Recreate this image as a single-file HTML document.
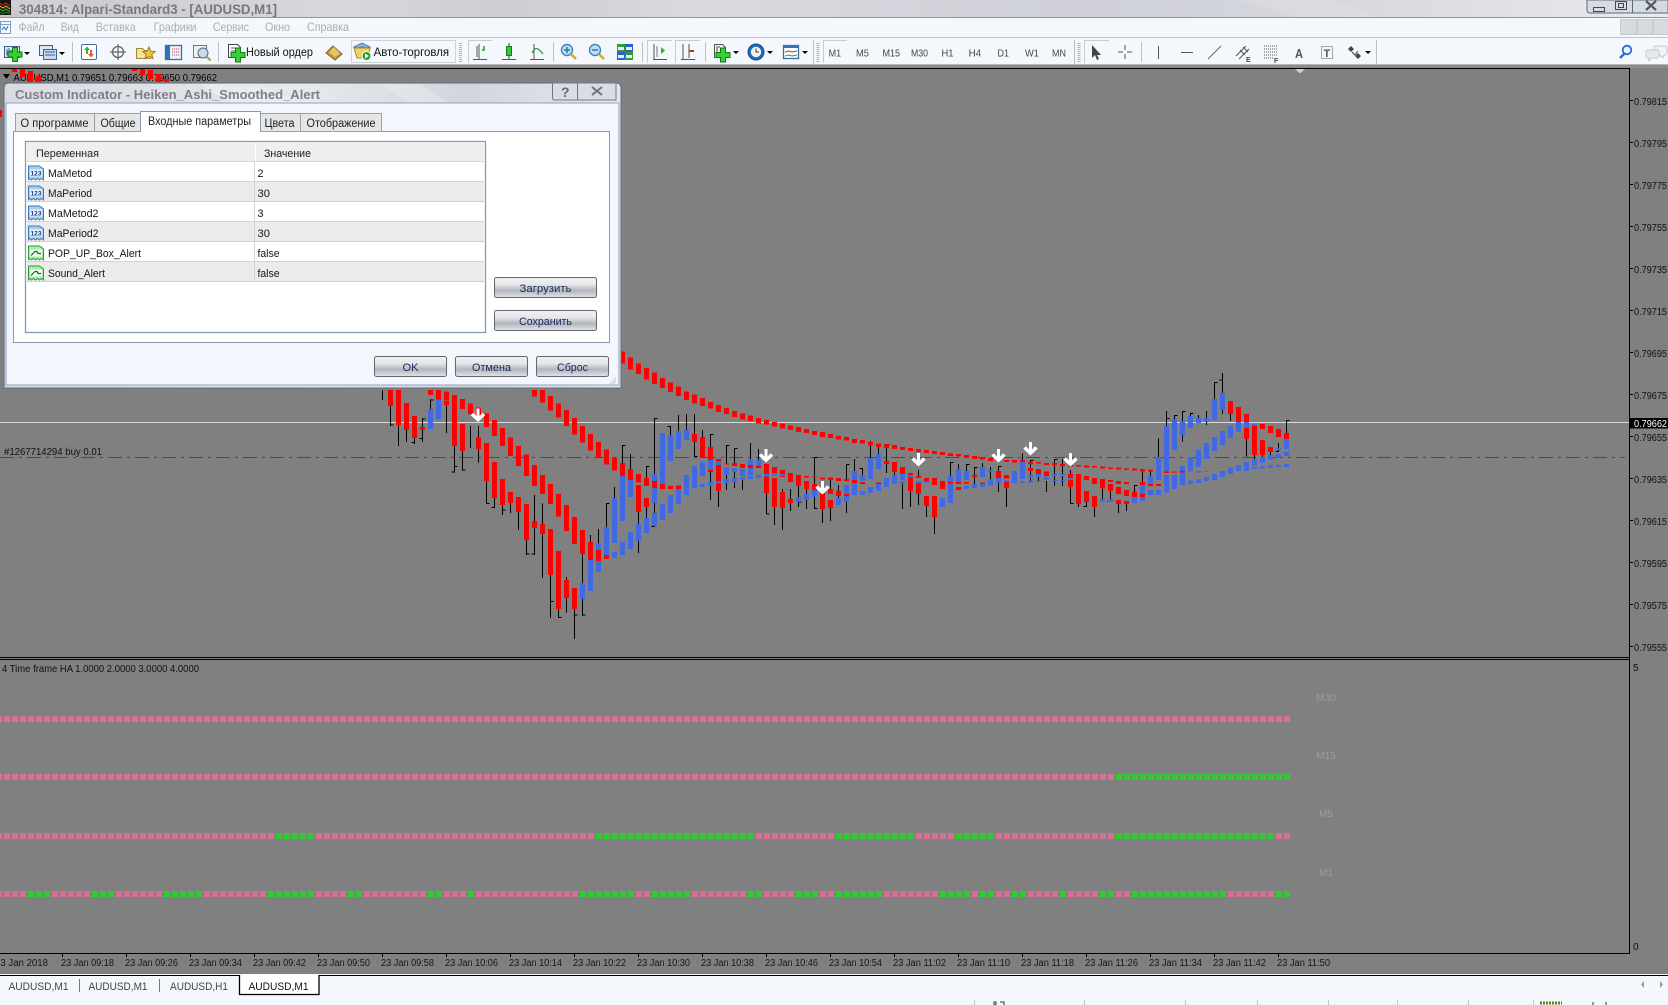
<!DOCTYPE html>
<html><head><meta charset="utf-8"><title>Alpari-Standard3</title>
<style>
html,body{margin:0;padding:0;background:#808080;width:1668px;height:1005px;overflow:hidden}
svg{display:block}
text{font-family:"Liberation Sans","Noto Sans CJK SC",sans-serif;font-size:11px;fill:#151515}
.ax text,.ax{font-size:10px;fill:#111}
.c{shape-rendering:crispEdges;fill:none}
.mn{fill:#a9adb5;font-size:12px}
.tf{fill:#444;font-size:11px}
.bt{fill:#1b2a60;font-size:11px;text-anchor:middle}
</style></head><body>
<svg xmlns="http://www.w3.org/2000/svg" width="1668" height="1005" viewBox="0 0 1668 1005">
<defs>
<linearGradient id="gt" x1="0" x2="1" y1="0" y2="0"><stop offset="0" stop-color="#c8c8cc"/><stop offset=".2" stop-color="#d8d8dc"/><stop offset=".3" stop-color="#cdced4"/><stop offset=".42" stop-color="#d9dadf"/><stop offset=".65" stop-color="#cfd0d8"/><stop offset=".8" stop-color="#d6d8de"/><stop offset="1" stop-color="#e8eaee"/></linearGradient>
<linearGradient id="gd" x1="0" x2="1" y1="0" y2="0"><stop offset="0" stop-color="#d8dbe2"/><stop offset=".5" stop-color="#e6e8ed"/><stop offset=".75" stop-color="#d2d5dc"/><stop offset="1" stop-color="#e4e7ec"/></linearGradient>
<linearGradient id="gb" x1="0" x2="0" y1="0" y2="1"><stop offset="0" stop-color="#f0f2f4"/><stop offset=".35" stop-color="#e4e6e9"/><stop offset=".65" stop-color="#b2b6bc"/><stop offset=".82" stop-color="#c9ccd1"/><stop offset="1" stop-color="#e2e4e7"/></linearGradient>
<path id="plus" d="M-2.500-7h5v4.500h4.500v5h-4.500v4.500h-5v-4.500h-4.500v-5h4.500z" fill="#35d035" stroke="#0d7d0d"/>
<path id="drop" d="M0 0h6l-3 3z" fill="#000"/>
<g id="i1"><path d="M.5 1.500h11l4 3v11l-2-1.500-2 1.500-2-1.500-2 1.500-2-1.500-2 1.500-2-1.500-1 1z" fill="#a8cff2" stroke="#3d78b8"/><rect x="2" y="5" width="12" height="7" fill="#e8f3fc"/><text x="2.500" y="11" style="font-size:6.500px;font-weight:bold;fill:#123a78" textLength="11" lengthAdjust="spacingAndGlyphs">123</text></g>
<g id="i2"><path d="M.5 1.500h11l4 3v11l-2-1.500-2 1.500-2-1.500-2 1.500-2-1.500-2 1.500-2-1.500-1 1z" fill="#a6eeaa" stroke="#2f9a3a"/><rect x="2" y="5" width="12" height="7" fill="#f2fbf2"/><path d="M3 11l4-4h2l1 2h3" stroke="#0d6a1a" fill="none" stroke-width="1.200"/></g>
<path id="arw" d="M-1.500 0h3v7.500l3.200-3.200 2.500 2.500-7.200 6.700-7.200-6.700 2.500-2.500 3.200 3.200z" fill="#fff"/>
</defs>

<!-- title bar -->
<rect width="1668" height="18" fill="url(#gt)"/>
<path d="M1240 0h90l50 18h-80zM0 0h60l40 18H30z" fill="#fff" opacity=".12"/>
<rect y="17" width="1668" height="1" fill="#8596ad"/>
<g>
<rect x="0" y="0" width="11" height="15" fill="#161616"/>
<path d="M0 3l3 2 3-2 4 3" stroke="#e02020" fill="none"/><path d="M0 6l3 2 3-2 4 3" stroke="#e8c020" fill="none"/><path d="M0 9l3 2 3-2 4 3" stroke="#40b030" fill="none"/><path d="M0 12l3 2 3-2 4 2" stroke="#208020" fill="none"/>
</g>
<text x="19" y="14" style="font-size:13.500px;fill:#77777c;font-weight:bold" textLength="258" lengthAdjust="spacingAndGlyphs">304814: Alpari-Standard3 - [AUDUSD,M1]</text>
<path d="M1587 0v10q0 3 3 3h78V0z" fill="#d6dae1" stroke="#5d6b80"/>
<path d="M1632.500 0v13" stroke="#5d6b80"/>
<rect x="1593.500" y="7.500" width="11" height="4" fill="none" stroke="#445"/>
<rect x="1615.500" y="1.500" width="11" height="8" fill="none" stroke="#445"/><rect x="1618.500" y="3.500" width="5" height="4" fill="none" stroke="#445"/>
<path d="M1646 1l10 9M1656 1l-10 9" stroke="#556" stroke-width="2.200" fill="none"/>

<!-- menu bar -->
<rect y="18" width="1668" height="19" fill="#f4f7fc"/>
<rect y="37" width="1668" height="1" fill="#c2c6ca"/>
<g fill="none" stroke="#7d9cc4"><rect x=".5" y="21.500" width="10" height="12"/><path d="M2 30l2-3 2 3 2-4" stroke="#4070b0"/><path d="M.5 24.500h10"/></g>
<text class="mn" x="18.500" y="31" textLength="26" lengthAdjust="spacingAndGlyphs">Файл</text>
<text class="mn" x="60.700" y="31" textLength="18" lengthAdjust="spacingAndGlyphs">Вид</text>
<text class="mn" x="95.700" y="31" textLength="40" lengthAdjust="spacingAndGlyphs">Вставка</text>
<text class="mn" x="153.600" y="31" textLength="43" lengthAdjust="spacingAndGlyphs">Графики</text>
<text class="mn" x="212.900" y="31" textLength="36" lengthAdjust="spacingAndGlyphs">Сервис</text>
<text class="mn" x="265" y="31" textLength="25" lengthAdjust="spacingAndGlyphs">Окно</text>
<text class="mn" x="307" y="31" textLength="42" lengthAdjust="spacingAndGlyphs">Справка</text>
<g fill="#d6d9de" stroke="#c8ccd2"><rect x="1620.500" y="19.500" width="16" height="15"/><rect x="1637.500" y="19.500" width="15" height="15"/><rect x="1653.500" y="19.500" width="15" height="15"/></g>

<!-- toolbar -->
<rect y="38" width="1668" height="26" fill="#f4f7fc"/>
<rect y="64" width="1668" height="4" fill="#8c8c8c"/>
<rect y="64" width="1668" height="1" fill="#b4b4b4"/>
<g>
<!-- new chart -->
<rect x="4.500" y="46.500" width="15" height="11" fill="#dce9f7" stroke="#3b5f90"/><path d="M7 49v6h10M9 48v3h3" stroke="#3b5f90" fill="none"/>
<use href="#plus" x="15" y="54.500"/><use href="#drop" x="24" y="52"/>
<!-- profiles -->
<rect x="39.500" y="45.500" width="13" height="10" fill="#dce9f7" stroke="#3b5f90"/><rect x="43.500" y="49.500" width="13" height="10" fill="#c7dcf2" stroke="#3b5f90"/><path d="M45 52h10M45 55h10" stroke="#3b5f90"/><use href="#drop" x="59" y="52"/>
<rect x="72" y="42" width="1" height="20" fill="#bcc0c4"/>
<!-- market watch -->
<rect x="81.500" y="44.500" width="15" height="15" rx="1.500" fill="#fff" stroke="#3a6da6"/><path d="M86 54v-4h-2l3-3.500 3 3.500h-2v4z" fill="#2eb62e"/><path d="M90 50v4h-2l3 3.500 3-3.500h-2v-4z" fill="#e45a2a"/>
<!-- navigator -->
<circle cx="118" cy="52" r="5.500" fill="#f4f7fc" stroke="#666" stroke-width="1.300"/><path d="M118 44v16M110 52h16" stroke="#666" stroke-width="1.200"/>
<!-- folder star -->
<path d="M136.500 48.500h6l2 2h6v8h-14z" fill="#f6e39a" stroke="#a08a40"/><path d="M149 47l1.800 4.200 4.400.3-3.400 2.800 1.100 4.300-3.900-2.400-3.900 2.400 1.100-4.300-3.400-2.800 4.400-.3z" fill="#f3c63c" stroke="#9c8024"/>
<!-- terminal -->
<rect x="165.500" y="45.500" width="16" height="14" fill="#e9f2fb" stroke="#2f72b8" stroke-width="1.300"/><rect x="165" y="45" width="5" height="15" fill="#2f72b8"/><path d="M172 49h8M172 52h8M172 55h8" stroke="#c04040" stroke-dasharray="1 1"/>
<!-- tester -->
<rect x="193.500" y="45.500" width="13" height="12" fill="#eef1f5" stroke="#777"/><circle cx="203" cy="53" r="5" fill="#c4dcee" stroke="#667"/><path d="M206.500 56.500l4 4" stroke="#b89838" stroke-width="2"/>
<rect x="218" y="42" width="1" height="20" fill="#bcc0c4"/>
<!-- new order -->
<path d="M228.500 44.500h9l3 3v10h-12z" fill="#fff" stroke="#444"/><path d="M231 48h5M231 51h7M231 54h5" stroke="#555"/><use href="#plus" x="238" y="55"/>
<text x="246" y="56" style="font-size:12px;fill:#111" textLength="67" lengthAdjust="spacingAndGlyphs">Новый ордер</text>
<!-- gold -->
<path d="M326 53l7-7 9 8-7 6z" fill="#c99c3a" stroke="#7c5d20"/><path d="M329 52l5-5 6 6-5 4z" fill="#e6c46a"/>
<!-- auto -->
<rect x="351.500" y="40.500" width="104" height="22" fill="#f4f7fc" stroke="#d0d4da"/>
<path d="M354 47l8-4 8 4-3 1-5-1-5 1z" fill="#8ab4d8" stroke="#507aa0"/><path d="M354 48h16l-2 10h-11z" fill="#ecd26c" stroke="#a08c3c"/><circle cx="366.500" cy="56" r="4.500" fill="#25a025" stroke="#fff"/><path d="M365 53.500l4 2.500-4 2.500z" fill="#fff"/>
<text x="373.600" y="56" style="font-size:12px;fill:#111" textLength="75.500" lengthAdjust="spacingAndGlyphs">Авто-торговля</text>
<path d="M460.500 43v19" stroke="#b0b4b8" stroke-dasharray="1 1" stroke-width="3"/>
<path d="M468.500 63V40.500H492" stroke="#c8ccd2" fill="none"/>
<path d="M479 44v15M473 59.500h14" stroke="#555" fill="none"/><path d="M477 46v11M485 58" stroke="#555"/><path d="M482 50h2v-4" stroke="#20a020" fill="none" stroke-width="1.500"/>
<path d="M509 44v15M502 59.500h14M506.500 56" stroke="#555" fill="none"/><rect x="506.500" y="46.500" width="5" height="9" fill="#35c835" stroke="#1c7c1c"/><path d="M509 43v3M509 56v3" stroke="#333"/>
<path d="M534 44v15M530 59.500h14" stroke="#555" fill="none"/><path d="M532 53q3-6 6-4t5 5" stroke="#2aa040" fill="none" stroke-width="1.300"/>
<rect x="553" y="42" width="1" height="20" fill="#bcc0c4"/>
<!-- zoom in/out -->
<circle cx="567" cy="50" r="5.500" fill="#bfe0f4" stroke="#3c88bc" stroke-width="1.400"/><path d="M564 50h6M567 47v6" stroke="#2f6f9f" stroke-width="1.400"/><path d="M571 54l5 5" stroke="#d0aa40" stroke-width="2.500"/>
<circle cx="595" cy="50" r="5.500" fill="#bfe0f4" stroke="#3c88bc" stroke-width="1.400"/><path d="M592 50h6" stroke="#2f6f9f" stroke-width="1.400"/><path d="M599 54l5 5" stroke="#d0aa40" stroke-width="2.500"/>
<!-- tile -->
<rect x="617" y="44" width="8" height="8" fill="#2e9d3a"/><rect x="625" y="44" width="8" height="8" fill="#2a62c8"/><rect x="617" y="52" width="8" height="8" fill="#2a62c8"/><rect x="625" y="52" width="8" height="8" fill="#2e9d3a"/>
<path d="M618 47h6v3h-6zM626 47h6v3h-6zM618 55h6v3h-6zM626 55h6v3h-6z" fill="#e8eef6"/>
<rect x="642" y="42" width="1" height="20" fill="#bcc0c4"/>
<path d="M647.500 63V40.500H672" stroke="#c8ccd2" fill="none"/>
<path d="M654 44v15M653 59.500h14" stroke="#555" fill="none"/><path d="M661 47v7l4-3.500z" fill="#2fb02f"/><path d="M657 46v11" stroke="#777"/>
<path d="M675.500 63V40.500H700" stroke="#c8ccd2" fill="none"/>
<path d="M683 44v15M681 59.500h14M689 44v14" stroke="#555" fill="none"/><path d="M691 51h3M689 51h2" stroke="#d03020" stroke-width="2"/>
<rect x="705" y="42" width="1" height="20" fill="#bcc0c4"/>
<!-- indicators -->
<path d="M714.500 44.500h8l3 3v10h-11z" fill="#eef1f4" stroke="#555"/><path d="M717 48v6M716 47h4" stroke="#555"/><use href="#plus" x="723" y="55"/><use href="#drop" x="733" y="51"/>
<!-- clock -->
<circle cx="756" cy="52" r="8" fill="#1f69b8" stroke="#184f8e"/><circle cx="756" cy="52" r="5.200" fill="#eef2f6"/><path d="M756 48.500v3.500h3" stroke="#333" fill="none"/><use href="#drop" x="767" y="51"/>
<!-- templates -->
<rect x="783.500" y="45.500" width="15" height="13" fill="#fff" stroke="#3a6da6" stroke-width="1.300"/><rect x="783" y="45" width="16" height="3" fill="#3a72b6"/><path d="M785 52l4-1 3 1 5-1" stroke="#d03030" fill="none"/><path d="M785 56l4-1 3 1 5-1" stroke="#30a030" fill="none"/><use href="#drop" x="802" y="51"/>
<rect x="813" y="40" width="1" height="24" fill="#bcc0c4"/>
<path d="M818 43v19" stroke="#b0b4b8" stroke-dasharray="1 1" stroke-width="3"/>
<path d="M823.500 63V40.500H847" stroke="#c8ccd2" fill="none"/>
</g>
<g style="font-size:10.500px">
<text x="828.600" y="56.500" style="font-size:10.500px;fill:#444" textLength="12.500" lengthAdjust="spacingAndGlyphs">M1</text>
<text x="856" y="56.500" style="font-size:10.500px;fill:#444" textLength="13" lengthAdjust="spacingAndGlyphs">M5</text>
<text x="882.500" y="56.500" style="font-size:10.500px;fill:#444" textLength="17.500" lengthAdjust="spacingAndGlyphs">M15</text>
<text x="911" y="56.500" style="font-size:10.500px;fill:#444" textLength="17" lengthAdjust="spacingAndGlyphs">M30</text>
<text x="941.500" y="56.500" style="font-size:10.500px;fill:#444" textLength="12" lengthAdjust="spacingAndGlyphs">H1</text>
<text x="968.600" y="56.500" style="font-size:10.500px;fill:#444" textLength="12.500" lengthAdjust="spacingAndGlyphs">H4</text>
<text x="997.500" y="56.500" style="font-size:10.500px;fill:#444" textLength="11.500" lengthAdjust="spacingAndGlyphs">D1</text>
<text x="1025" y="56.500" style="font-size:10.500px;fill:#444" textLength="14" lengthAdjust="spacingAndGlyphs">W1</text>
<text x="1052" y="56.500" style="font-size:10.500px;fill:#444" textLength="14" lengthAdjust="spacingAndGlyphs">MN</text>
</g>
<rect x="1074" y="40" width="1" height="24" fill="#bcc0c4"/>
<path d="M1079 43v19" stroke="#b0b4b8" stroke-dasharray="1 1" stroke-width="3"/>
<path d="M1084.500 63V40.500H1109" stroke="#c8ccd2" fill="none"/>
<path d="M1092 45v13l3-3 2 5 2-1-2-4h4z" fill="#444"/>
<path d="M1125 45v5M1125 54v5M1118 52h5M1127 52h5" stroke="#555" fill="none"/>
<rect x="1141" y="42" width="1" height="20" fill="#bcc0c4"/>
<path d="M1158.500 46v13" stroke="#555"/><path d="M1181 52.500h12" stroke="#555"/><path d="M1208 59l13-13" stroke="#666"/>
<path d="M1236 56l10-10M1239 59l10-10M1240 50l5 5M1243 47l5 5" stroke="#555" fill="none"/><text x="1246" y="62" style="font-size:7px;font-weight:bold;fill:#444">E</text>
<path d="M1264 46h14M1264 49h14M1264 52h14M1264 55h14M1264 58h9" stroke="#555" stroke-dasharray="1 1" fill="none"/><text x="1274" y="63" style="font-size:7px;font-weight:bold;fill:#444">F</text>
<text x="1295" y="58" style="font-size:13px;fill:#555;font-weight:bold" textLength="8" lengthAdjust="spacingAndGlyphs">A</text>
<rect x="1321.500" y="46.500" width="11" height="12" fill="none" stroke="#555" stroke-dasharray="1 1"/><text x="1323.500" y="57" style="font-size:11px;fill:#555;font-weight:bold">T</text>
<path d="M1348 49l3-3 3 3-3 3zM1355 56l3-3 3 3-3 3z" fill="#444"/><path d="M1352 52l3 3 3-4" stroke="#444" fill="none"/><use href="#drop" x="1365" y="51"/>
<rect x="1376" y="40" width="1" height="24" fill="#bcc0c4"/>
<circle cx="1627" cy="50" r="4.300" fill="#eaf2fb" stroke="#2a6fcf" stroke-width="1.800"/><path d="M1624 54l-4 4" stroke="#2a6fcf" stroke-width="2.500"/>
<path d="M1654 46h11a2 2 0 0 1 2 2v5a2 2 0 0 1-2 2h-1l-1 3-3-3h-6z" fill="#f0f2f4" stroke="#c4c8cc"/><path d="M1648 50h9a2 2 0 0 1 2 2v4a2 2 0 0 1-2 2h-6l-2 3-1-3a2 2 0 0 1-2-2v-4a2 2 0 0 1 2-2z" fill="#e6e9ec" stroke="#c4c8cc"/>

<!-- chart -->
<rect y="68" width="1668" height="906" fill="#808080"/>
<rect y="68" width="1629" height="1" fill="#000"/>
<rect x="1629" y="68" width="1" height="885" fill="#000"/>
<path d="M1295 69h10l-5 4.500z" fill="#cfcfcf"/>
<rect y="657" width="1629" height="1" fill="#000"/><rect y="659" width="1629" height="1" fill="#000"/><rect y="953" width="1630" height="1" fill="#000"/>
<rect y="422" width="1629" height="1" fill="#d9d9d9"/>
<path class="c" d="M0 457.500H1625" stroke="#0b7a0b" stroke-dasharray="14 5 3 5"/>
<text x="4" y="455" class="ax" style="font-size:10px" textLength="98" lengthAdjust="spacingAndGlyphs">#1267714294 buy 0.01</text>

<path d="M3 74h7l-3.500 5z" fill="#000"/>
<text x="13.500" y="81" style="font-size:10px;fill:#000" textLength="203.500" lengthAdjust="spacingAndGlyphs">AUDUSD,M1  0.79651 0.79663 0.79650 0.79662</text>
<path class="c" fill="#f00" style="fill:#f00" d="M12 69h5v3h-5zM20 69h5v8h-5zM28 71h5v11h-5zM36 76h5v6h-5zM132 69h5v2h-5zM140 69h5v6h-5zM148 70h5v9h-5zM156 74h5v8h-5zM164 79h5v3h-5zM0 110h2v7H0z"/>

<!-- candles zoom5 coordinates -->
<g transform="translate(0,350) scale(1,.33333)">
<path class="c" stroke="#000" stroke-width="1" d="M382.500 120V150M390.500 168V228M398.500 225V288M406.500 240V276M414.500 264V282M422.500 204V276M430.500 148V177M446.500 165V249M454.500 288V368M462.500 303V362M470.500 228V294M478.500 228V338M486.500 393V462M494.500 444V474M502.500 465V495M510.500 459V489M518.500 486V540M526.500 570V615M534.500 435V615M542.500 460V684M550.500 675V804M558.500 777V804M566.500 681V690M566.500 744V788M574.500 777V867M582.500 612V798M590.500 555V576M598.500 537V580M606.500 459V531M614.500 411V444M622.500 285V339M630.500 312V357M638.500 486V609M646.500 348V384M646.500 471V513M654.500 204V372M654.500 459V530M670.500 228V255M678.500 195V243M686.500 192V240M694.500 192V252M694.500 276V321M702.500 240V261M710.500 252V291M710.500 366V450M718.500 423V471M726.500 285V340M726.500 375V420M734.500 294V345M734.500 366V414M742.500 390V420M750.500 279V330M758.500 297V330"/>
<path class="c" stroke="#000" stroke-width="3" d="M390.500 225h3M414.500 278h-3M422.500 266h-3M422.500 207h3M430.500 150h3M454.500 350h3M454.500 366h-3M462.500 360h3M486.500 460h3M494.500 472h-3M502.500 480h3M526.500 612h3M534.500 612h-3M550.500 755h3M558.500 802h3M574.500 795h3M582.500 795h3M606.500 460h3M622.500 287h3M646.500 350h3M654.500 205h3M654.500 530h-3M670.500 230h-3M694.500 320h3M710.500 253h3M726.500 287h3M734.500 296h3"/>
<path class="c" stroke="#f00" stroke-width="5" d="M390.500 120V168M398.500 120V225M406.500 159V240M414.500 198V264M422.500 231V240M430.500 120V135M438.500 120V148M446.500 125V150M446.500 152V165M454.500 135V288M462.500 147V177M462.500 222V303M470.500 160V192M478.500 172V200M478.500 262V297M486.500 190V231M486.500 279V393M494.500 210V258M494.500 336V444M502.500 234V288M502.500 387V465M510.500 262V318M510.500 426V459M518.500 288V348M518.500 441V486M526.500 314V378M526.500 462V570M534.500 120V140M534.500 345V408M534.500 513V534M542.500 120V158M542.500 375V432M542.500 522V552M550.500 138V182M550.500 402V462M550.500 537V675M558.500 160V202M558.500 432V500M558.500 603V777M566.500 180V228M566.500 465V543M566.500 690V744M574.500 204V254M574.500 501V582M574.500 714V777M582.500 228V278M582.500 540V612M590.500 252V302M590.500 576V630M598.500 276V324M598.500 600V633M606.500 298V344M606.500 615V627M614.500 322V362M622.500 5V40M622.500 339V378M630.500 22V58M630.500 357V390M638.500 40V72M638.500 372V398M638.500 405V486M646.500 54V88M646.500 384V408M646.500 444V471M654.500 68V102M654.500 393V414M662.500 84V114M662.500 402V417M670.500 98V126M670.500 408V417M678.500 110V138M678.500 408V417M686.500 124V150M694.500 134V160M694.500 252V276M702.500 144V168M702.500 261V324M710.500 156V176M710.500 291V330M710.500 360V366M718.500 165V186M718.500 327V333M718.500 345V393M718.500 400V423M726.500 174V192M726.500 340V343M734.500 183V201M734.500 339V348M742.500 190V208M742.500 342V354M750.500 197V213M750.500 345V354M758.500 204V220M758.500 348V354"/>
<path class="c" stroke="#4169e1" stroke-width="5" d="M430.500 177V237M438.500 148V207M470.500 262V264M582.500 699V747M590.500 630V723M598.500 580V600M598.500 633V666M606.500 531V615M614.500 444V579M614.500 606V624M622.500 378V513M622.500 576V615M630.500 390V441M630.500 546V597M638.500 522V573M646.500 504V549M654.500 372V393M654.500 414V459M654.500 489V528M662.500 249V402M662.500 462V510M670.500 255V333M670.500 435V489M678.500 243V297M678.500 405V408M678.500 417V462M686.500 240V270M686.500 375V435M694.500 348V414M702.500 336V378M702.500 402V411M710.500 330V360M710.500 396V408M718.500 333V345M718.500 393V400M726.500 351V375M726.500 387V399M734.500 354V366M734.500 384V396M742.500 357V378M742.500 381V390M750.500 327V345M750.500 354V375M750.500 378V387M758.500 330V348M758.500 375V384"/>
</g>

<!-- candles zoom6 coordinates -->
<g transform="translate(0,370) scale(1,.33333)">
<path class="c" stroke="#000" stroke-width="1" d="M766.500 369V432M774.500 411V465M782.500 357V366M782.500 414V480M790.500 357V387M790.500 399V423M798.500 348V381M798.500 396V411M806.500 357V372M806.500 390V417M814.500 262V342M814.500 381V417M822.500 417V459M830.500 330V357M830.500 414V453M838.500 345V363M838.500 378V384M846.500 282V327M846.500 396V429M854.500 267V303M862.500 294V315M870.500 213V264M878.500 231V252M886.500 222V273M886.500 282V309M894.500 306V315M902.500 342V417M910.500 363V411M918.500 300V318M918.500 372V405M926.500 408V441M934.500 441V492M950.500 276V318M958.500 282V297M966.500 282V303M974.500 291V315M974.500 321V342M982.500 279V291M990.500 291V300M990.500 305V327M998.500 288V303M998.500 339V366M1006.500 354V411M1022.500 250V270M1030.500 270V294M1030.500 303V315M1030.500 324V333M1038.500 321V333M1046.500 333V366M1054.500 267V312M1054.500 318V348M1062.500 267V312M1062.500 318V348M1070.500 300V312M1070.500 351V402M1078.500 402V411M1086.500 396V411M1094.500 411V441M1102.500 356V387M1110.500 363V396M1118.500 402V429M1126.500 402V423M1134.500 345V366M1142.500 303V336M1150.500 300V318M1158.500 205V261"/>
<path class="c" stroke="#000" stroke-width="3" d="M766.500 432h3M798.500 396h3M814.500 262h3M814.500 416h3M846.500 283h3M862.500 296h-3M886.500 224h3M950.500 277h3M966.500 283h3M974.500 292h3M998.500 290h3M1030.500 271h3M1054.500 268h3M1070.500 400h3M1086.500 410h-3M1110.500 395h-3M1134.500 346h3"/>
<path class="c" stroke="#f00" stroke-width="5" d="M766.500 150V163M766.500 282V312M766.500 320V369M774.500 156V170M774.500 291V309M774.500 324V411M782.500 161V175M782.500 300V312M782.500 318V321M782.500 366V414M790.500 167V180M790.500 309V336M790.500 387V399M798.500 171V186M798.500 315V348M806.500 177V189M806.500 318V322M806.500 333V357M814.500 183V195M814.500 319V323M814.500 342V360M822.500 186V201M822.500 322V328M822.500 369V417M830.500 192V204M830.500 322V330M830.500 357V372M830.500 390V414M838.500 198V209M838.500 324V333M838.500 363V378M846.500 201V212M846.500 327V333M846.500 372V378M854.500 207V219M854.500 330V339M862.500 210V220M862.500 336V342M870.500 216V226M878.500 221V231M878.500 337V342M886.500 222V234M886.500 273V282M894.500 225V237M894.500 276V306M902.500 231V240M902.500 291V312M910.500 234V243M910.500 309V315M910.500 322V363M918.500 237V246M918.500 318V324M918.500 339V372M926.500 240V249M926.500 324V333M926.500 378V408M934.500 243V252M934.500 324V345M934.500 378V441M942.500 246V255M942.500 333V357M950.500 250V258M950.500 336V340M958.500 252V260M958.500 336V342M958.500 351V360M966.500 255V264M966.500 336V340M974.500 258V267M974.500 315V321M982.500 261V269M982.500 337V340M990.500 264V273M998.500 266V272M998.500 303V324M1006.500 270V276M1006.500 315V326M1006.500 336V354M1014.500 270V278M1022.500 270V276M1030.500 276V282M1030.500 294V303M1038.500 276V281M1038.500 297V312M1046.500 279V285M1046.500 304V318M1054.500 279V285M1062.500 282V288M1070.500 285V290M1070.500 312V324M1070.500 330V351M1078.500 285V290M1078.500 312V402M1086.500 287V292M1086.500 318V330M1086.500 363V396M1094.500 288V293M1094.500 324V342M1094.500 378V411M1102.500 289V295M1102.500 327V356M1110.500 292V297M1110.500 330V336M1110.500 342V363M1118.500 293V299M1118.500 333V342M1118.500 351V372M1118.500 390V402M1126.500 295V300M1126.500 336V342M1126.500 360V378M1126.500 393V402M1134.500 295V302M1134.500 366V381M1142.500 297V304M1142.500 336V345M1142.500 372V381M1150.500 299V305M1150.500 342V348M1158.500 300V303M1158.500 342V348"/>
<path class="c" stroke="#4169e1" stroke-width="5" d="M766.500 312V320M774.500 311V318M782.500 312V318M798.500 381V396M806.500 372V390M814.500 360V381M838.500 384V405M846.500 345V372M846.500 378V396M854.500 303V330M854.500 339V375M862.500 315V333M862.500 363V375M870.500 264V327M870.500 351V369M878.500 252V297M878.500 342V363M886.500 324V351M894.500 315V342M902.500 312V330M902.500 333V342M910.500 315V322M918.500 333V339M926.500 333V339M942.500 384V411M950.500 318V336M950.500 340V399M958.500 297V336M966.500 303V330M966.500 348V357M974.500 342V354M982.500 291V321M982.500 340V351M990.500 300V305M990.500 327V345M998.500 324V339M1006.500 330V336M1014.500 303V339M1022.500 276V327M1022.500 333V339M1030.500 315V324M1030.500 333V339M1038.500 312V321M1038.500 333V336M1046.500 320V330M1054.500 312V318M1054.500 330V333M1062.500 312V315M1062.500 330V333M1070.500 325V330M1102.500 387V396M1110.500 387V396M1134.500 381V399M1142.500 345V372M1142.500 381V393M1150.500 318V342M1150.500 360V375M1158.500 261V330M1158.500 360V375"/>
</g>

<!-- candles zoom7 coordinates -->
<g transform="translate(0,360) scale(1,.33333)">
<path class="c" stroke="#000" stroke-width="1" d="M1166.500 153V198M1174.500 165V178M1182.500 153V183M1182.500 225V245M1190.500 158V168M1198.500 165V174M1206.500 153V174M1206.500 184V195M1214.500 66V117M1222.500 39V99M1222.500 150V162M1230.500 162V183M1246.500 237V290M1254.500 285V297M1262.500 285V291M1270.500 276V285M1278.500 249V264M1278.500 270V276M1286.500 180V219"/>
<path class="c" stroke="#000" stroke-width="3" d="M1166.500 176h3M1174.500 166h3M1182.500 155h3M1190.500 160h3M1214.500 67h3M1222.500 60h-3M1278.500 274h-3M1286.500 182h3"/>
<path class="c" stroke="#f00" stroke-width="5" d="M1166.500 335V339M1174.500 335V338M1182.500 333V338M1230.500 123V162M1238.500 141V186M1246.500 162V186M1246.500 204V237M1254.500 198V285M1262.500 192V207M1262.500 240V285M1270.500 198V219M1270.500 261V276M1278.500 207V231M1286.500 219V237"/>
<path class="c" stroke="#4169e1" stroke-width="5" d="M1166.500 198V335M1166.500 345V397M1174.500 178V270M1174.500 345V387M1182.500 183V225M1182.500 318V333M1182.500 338V375M1190.500 168V204M1190.500 291V335M1190.500 362V372M1198.500 174V189M1198.500 270V321M1198.500 333V338M1198.500 357V369M1206.500 174V184M1206.500 249V297M1206.500 333V336M1206.500 351V363M1214.500 117V180M1214.500 231V273M1214.500 342V360M1222.500 99V150M1222.500 213V255M1222.500 333V351M1230.500 198V234M1230.500 323V342M1238.500 186V216M1238.500 315V333M1246.500 186V204M1246.500 306V333M1254.500 192V198M1254.500 297V318M1254.500 321V327M1262.500 291V309M1262.500 318V325M1270.500 285V300M1270.500 315V324M1278.500 264V270M1278.500 282V294M1278.500 315V321M1286.500 237V267M1286.500 276V288M1286.500 312V321"/>
</g>

<!-- arrows -->
<use href="#arw" x="478" y="408.500"/><use href="#arw" x="766" y="449"/><use href="#arw" x="822.500" y="481"/><use href="#arw" x="918.500" y="453"/><use href="#arw" x="998.500" y="449"/><use href="#arw" x="1030.500" y="442"/><use href="#arw" x="1070.500" y="453"/>

<!-- price axis -->
<g class="ax">
<path class="c" stroke="#000" d="M1630 100.500h3M1630 142.500h3M1630 184.500h3M1630 226.500h3M1630 268.500h3M1630 310.500h3M1630 352.500h3M1630 394.500h3M1630 436.500h3M1630 478.500h3M1630 520.500h3M1630 562.500h3M1630 604.500h3M1630 646.500h3"/>
<g style="font-size:10px">
<text x="1634" y="105" textLength="33" lengthAdjust="spacingAndGlyphs">0.79815</text>
<text x="1634" y="147" textLength="33" lengthAdjust="spacingAndGlyphs">0.79795</text>
<text x="1634" y="189" textLength="33" lengthAdjust="spacingAndGlyphs">0.79775</text>
<text x="1634" y="231" textLength="33" lengthAdjust="spacingAndGlyphs">0.79755</text>
<text x="1634" y="273" textLength="33" lengthAdjust="spacingAndGlyphs">0.79735</text>
<text x="1634" y="315" textLength="33" lengthAdjust="spacingAndGlyphs">0.79715</text>
<text x="1634" y="357" textLength="33" lengthAdjust="spacingAndGlyphs">0.79695</text>
<text x="1634" y="399" textLength="33" lengthAdjust="spacingAndGlyphs">0.79675</text>
<text x="1634" y="441" textLength="33" lengthAdjust="spacingAndGlyphs">0.79655</text>
<text x="1634" y="483" textLength="33" lengthAdjust="spacingAndGlyphs">0.79635</text>
<text x="1634" y="525" textLength="33" lengthAdjust="spacingAndGlyphs">0.79615</text>
<text x="1634" y="567" textLength="33" lengthAdjust="spacingAndGlyphs">0.79595</text>
<text x="1634" y="609" textLength="33" lengthAdjust="spacingAndGlyphs">0.79575</text>
<text x="1634" y="651" textLength="33" lengthAdjust="spacingAndGlyphs">0.79555</text>
</g>
<rect x="1630" y="418" width="38" height="10.500" fill="#000"/>
<text x="1634" y="427" style="font-size:10px;fill:#fff" textLength="33" lengthAdjust="spacingAndGlyphs">0.79662</text>
<text x="1633" y="671" style="font-size:10px">5</text>
<text x="1633" y="950" style="font-size:10px">0</text>
</g>

<!-- subwindow -->
<text x="2" y="672" style="font-size:10px;fill:#111" textLength="197" lengthAdjust="spacingAndGlyphs">4 Time frame HA 1.0000 2.0000 3.0000 4.0000</text>
<path class="c" stroke="#dd6e93" stroke-width="6" stroke-dasharray="6 2" d="M-4 719H1290M-4 777H1290M-4 836H1290M-4 894H1290"/>
<path class="c" stroke="#2bcf2b" stroke-width="6" stroke-dasharray="6 2" d="M1116 777H1290M276 836H314M596 836H754M836 836H914M956 836H994M1116 836H1274M28 894H50M92 894H114M164 894H202M268 894H314M348 894H362M428 894H442M468 894H474M580 894H634M652 894H690M748 894H762M796 894H818M836 894H882M940 894H970M980 894H994M1012 894H1026M1060 894H1066M1100 894H1114M1132 894H1226M1276 894H1290"/>
<g style="font-size:10px">
<text x="1316" y="701" style="font-size:10px;fill:#9c9c9c" textLength="20" lengthAdjust="spacingAndGlyphs">M30</text>
<text x="1316" y="759" style="font-size:10px;fill:#9c9c9c" textLength="20" lengthAdjust="spacingAndGlyphs">M15</text>
<text x="1319" y="817" style="font-size:10px;fill:#9c9c9c" textLength="14" lengthAdjust="spacingAndGlyphs">M5</text>
<text x="1319" y="876" style="font-size:10px;fill:#9c9c9c" textLength="14" lengthAdjust="spacingAndGlyphs">M1</text>
</g>

<!-- time axis -->
<path class="c" stroke="#000" d="M62.500 954v3M126.500 954v3M190.500 954v3M254.500 954v3M318.500 954v3M382.500 954v3M446.500 954v3M510.500 954v3M574.500 954v3M638.500 954v3M702.500 954v3M766.500 954v3M830.500 954v3M894.500 954v3M958.500 954v3M1022.500 954v3M1086.500 954v3M1150.500 954v3M1214.500 954v3M1278.500 954v3"/>
<g style="font-size:10px">
<text x="-5" y="966" style="font-size:10px" textLength="53" lengthAdjust="spacingAndGlyphs">23 Jan 2018</text>
<text x="61" y="966" style="font-size:10px" textLength="53" lengthAdjust="spacingAndGlyphs">23 Jan 09:18</text>
<text x="125" y="966" style="font-size:10px" textLength="53" lengthAdjust="spacingAndGlyphs">23 Jan 09:26</text>
<text x="189" y="966" style="font-size:10px" textLength="53" lengthAdjust="spacingAndGlyphs">23 Jan 09:34</text>
<text x="253" y="966" style="font-size:10px" textLength="53" lengthAdjust="spacingAndGlyphs">23 Jan 09:42</text>
<text x="317" y="966" style="font-size:10px" textLength="53" lengthAdjust="spacingAndGlyphs">23 Jan 09:50</text>
<text x="381" y="966" style="font-size:10px" textLength="53" lengthAdjust="spacingAndGlyphs">23 Jan 09:58</text>
<text x="445" y="966" style="font-size:10px" textLength="53" lengthAdjust="spacingAndGlyphs">23 Jan 10:06</text>
<text x="509" y="966" style="font-size:10px" textLength="53" lengthAdjust="spacingAndGlyphs">23 Jan 10:14</text>
<text x="573" y="966" style="font-size:10px" textLength="53" lengthAdjust="spacingAndGlyphs">23 Jan 10:22</text>
<text x="637" y="966" style="font-size:10px" textLength="53" lengthAdjust="spacingAndGlyphs">23 Jan 10:30</text>
<text x="701" y="966" style="font-size:10px" textLength="53" lengthAdjust="spacingAndGlyphs">23 Jan 10:38</text>
<text x="765" y="966" style="font-size:10px" textLength="53" lengthAdjust="spacingAndGlyphs">23 Jan 10:46</text>
<text x="829" y="966" style="font-size:10px" textLength="53" lengthAdjust="spacingAndGlyphs">23 Jan 10:54</text>
<text x="893" y="966" style="font-size:10px" textLength="53" lengthAdjust="spacingAndGlyphs">23 Jan 11:02</text>
<text x="957" y="966" style="font-size:10px" textLength="53" lengthAdjust="spacingAndGlyphs">23 Jan 11:10</text>
<text x="1021" y="966" style="font-size:10px" textLength="53" lengthAdjust="spacingAndGlyphs">23 Jan 11:18</text>
<text x="1085" y="966" style="font-size:10px" textLength="53" lengthAdjust="spacingAndGlyphs">23 Jan 11:26</text>
<text x="1149" y="966" style="font-size:10px" textLength="53" lengthAdjust="spacingAndGlyphs">23 Jan 11:34</text>
<text x="1213" y="966" style="font-size:10px" textLength="53" lengthAdjust="spacingAndGlyphs">23 Jan 11:42</text>
<text x="1277" y="966" style="font-size:10px" textLength="53" lengthAdjust="spacingAndGlyphs">23 Jan 11:50</text>
</g>

<!-- tab bar -->
<rect y="974" width="1668" height="1" fill="#f4f7fc"/>
<rect y="975" width="1668" height="1" fill="#000"/>
<rect y="976" width="1668" height="29" fill="#f4f7fc"/>
<path d="M79.500 979v13M159.500 979v13" stroke="#777"/>
<text class="tf" x="8.500" y="990" textLength="60" lengthAdjust="spacingAndGlyphs">AUDUSD,M1</text>
<text class="tf" x="88.500" y="990" textLength="59" lengthAdjust="spacingAndGlyphs">AUDUSD,M1</text>
<text class="tf" x="170" y="990" textLength="58" lengthAdjust="spacingAndGlyphs">AUDUSD,H1</text>
<path d="M239.500 975v19.500H319V975" fill="#fff" stroke="#000" stroke-width="1.300"/>
<text x="248.500" y="990" style="font-size:11px;fill:#111" textLength="60" lengthAdjust="spacingAndGlyphs">AUDUSD,M1</text>
<path d="M1644 981v7l-3-3.500zM1660 981v7l3-3.500z" fill="#999"/>
<!-- status -->
<rect y="1000" width="1668" height="5" fill="#f4f7fc"/>
<path d="M974.500 1000v5M1084.500 1000v5M1185.500 1000v5M1257.500 1000v5M1328.500 1000v5M1397.500 1000v5M1468.500 1000v5M1533.500 1000v5" stroke="#c4c8cc"/>
<path class="c" stroke="#6a7f10" stroke-width="3" stroke-dasharray="2 1" d="M1540 1003H1562"/>
<path d="M994 1005v-3h2v3zM1000 1002h4v3M1593 1005v-3M1606 1002v3" stroke="#333" fill="none"/>

<!-- dialog -->
<path d="M4 388V88q0-5 5-5h607q5 0 5 5v300z" fill="url(#gd)" stroke="#5f6b7d"/>
<path d="M200 84h60l40 19h-70zM380 84h40l30 19h-40z" fill="#fff" opacity=".22"/>
<rect x="6" y="103" width="613" height="282" fill="#f3f7fd" stroke="#8fa2bb"/>
<text x="15" y="99" style="font-size:13px;fill:#7d8087;font-weight:bold" textLength="305" lengthAdjust="spacingAndGlyphs">Custom Indicator - Heiken_Ashi_Smoothed_Alert</text>
<path d="M552.500 83v15q0 2 2 2H616V83z" fill="#d9dde3" stroke="#6e7a8c"/>
<path d="M577.500 83v17" stroke="#6e7a8c"/>
<text x="561" y="97" style="font-size:14px;fill:#667;font-weight:bold">?</text>
<path d="M592 87l10 8M602 87l-10 8" stroke="#6a7280" stroke-width="2" fill="none"/>

<!-- tabs -->
<rect x="13.500" y="131.500" width="596" height="211" fill="#fff" stroke="#8c9aae"/>
<g fill="#e6e6e6" stroke="#9aa0aa">
<rect x="15.500" y="113.500" width="79" height="18"/>
<rect x="94.500" y="113.500" width="46" height="18"/>
<rect x="260.500" y="113.500" width="40" height="18"/>
<rect x="300.500" y="113.500" width="81" height="18"/>
</g>
<path d="M140.500 132V111.500H260.500V132" fill="#fff" stroke="#8c9aae"/>
<rect x="141" y="130" width="119" height="3" fill="#fff"/>
<g>
<text x="20.500" y="127" style="font-size:11.500px;fill:#222" textLength="68" lengthAdjust="spacingAndGlyphs">О программе</text>
<text x="100.500" y="127" style="font-size:11.500px;fill:#222" textLength="35" lengthAdjust="spacingAndGlyphs">Общие</text>
<text x="148" y="125" style="font-size:11.500px;fill:#222" textLength="103" lengthAdjust="spacingAndGlyphs">Входные параметры</text>
<text x="264.500" y="127" style="font-size:11.500px;fill:#222" textLength="30" lengthAdjust="spacingAndGlyphs">Цвета</text>
<text x="306.500" y="127" style="font-size:11.500px;fill:#222" textLength="69" lengthAdjust="spacingAndGlyphs">Отображение</text>
</g>

<!-- table -->
<rect x="25.500" y="141.500" width="460" height="191" fill="#fff" stroke="#7f9db9" stroke-width="1.300"/>
<rect x="27" y="143" width="457" height="18" fill="#efefef"/><rect x="27" y="161" width="457" height="1" fill="#d8d8d8"/><rect x="255" y="143" width="1" height="18" fill="#fff"/>
<rect x="27" y="182" width="457" height="20" fill="#ebebeb"/><rect x="27" y="222" width="457" height="20" fill="#ebebeb"/><rect x="27" y="262" width="457" height="20" fill="#ebebeb"/>
<path class="c" stroke="#d2d2d2" d="M27 181.500H484M27 201.500H484M27 221.500H484M27 241.500H484M27 261.500H484M27 281.500H484M254.500 162V282"/>
<g style="font-size:11px">
<text x="36" y="157" style="fill:#222" textLength="63" lengthAdjust="spacingAndGlyphs">Переменная</text>
<text x="264" y="157" style="fill:#222" textLength="47" lengthAdjust="spacingAndGlyphs">Значение</text>
<text x="48" y="177" textLength="44" lengthAdjust="spacingAndGlyphs">MaMetod</text>
<text x="48" y="197" textLength="44" lengthAdjust="spacingAndGlyphs">MaPeriod</text>
<text x="48" y="217" textLength="50.500" lengthAdjust="spacingAndGlyphs">MaMetod2</text>
<text x="48" y="237" textLength="50.500" lengthAdjust="spacingAndGlyphs">MaPeriod2</text>
<text x="48" y="257" textLength="93" lengthAdjust="spacingAndGlyphs">POP_UP_Box_Alert</text>
<text x="48" y="277" textLength="57" lengthAdjust="spacingAndGlyphs">Sound_Alert</text>
<text x="257.500" y="177" textLength="6" lengthAdjust="spacingAndGlyphs">2</text>
<text x="257.500" y="197" textLength="12.500" lengthAdjust="spacingAndGlyphs">30</text>
<text x="257.500" y="217" textLength="6" lengthAdjust="spacingAndGlyphs">3</text>
<text x="257.500" y="237" textLength="12.500" lengthAdjust="spacingAndGlyphs">30</text>
<text x="257.500" y="257" textLength="22" lengthAdjust="spacingAndGlyphs">false</text>
<text x="257.500" y="277" textLength="22" lengthAdjust="spacingAndGlyphs">false</text>
</g>
<use href="#i1" x="28" y="164.500"/><use href="#i1" x="28" y="184.500"/><use href="#i1" x="28" y="204.500"/><use href="#i1" x="28" y="224.500"/><use href="#i2" x="28" y="244.500"/><use href="#i2" x="28" y="264.500"/>

<!-- buttons -->
<g fill="url(#gb)" stroke="#62686e">
<rect x="494.500" y="277.500" width="102" height="20" rx="2"/>
<rect x="494.500" y="310.500" width="102" height="20" rx="2"/>
<rect x="374.500" y="356.500" width="72" height="20" rx="2"/>
<rect x="455.500" y="356.500" width="72" height="20" rx="2"/>
<rect x="536.500" y="356.500" width="72" height="20" rx="2"/>
</g>
<text class="bt" x="545.500" y="292" textLength="52" lengthAdjust="spacingAndGlyphs">Загрузить</text>
<text class="bt" x="545.500" y="325" textLength="53" lengthAdjust="spacingAndGlyphs">Сохранить</text>
<text class="bt" x="410.500" y="371" textLength="16" lengthAdjust="spacingAndGlyphs">OK</text>
<text class="bt" x="491.500" y="371" textLength="39" lengthAdjust="spacingAndGlyphs">Отмена</text>
<text class="bt" x="572.500" y="371" textLength="31" lengthAdjust="spacingAndGlyphs">Сброс</text>
<path d="M610 384l6-6M613 384l3-3" stroke="#c4c8cc" fill="none"/>
</svg>
</body></html>
